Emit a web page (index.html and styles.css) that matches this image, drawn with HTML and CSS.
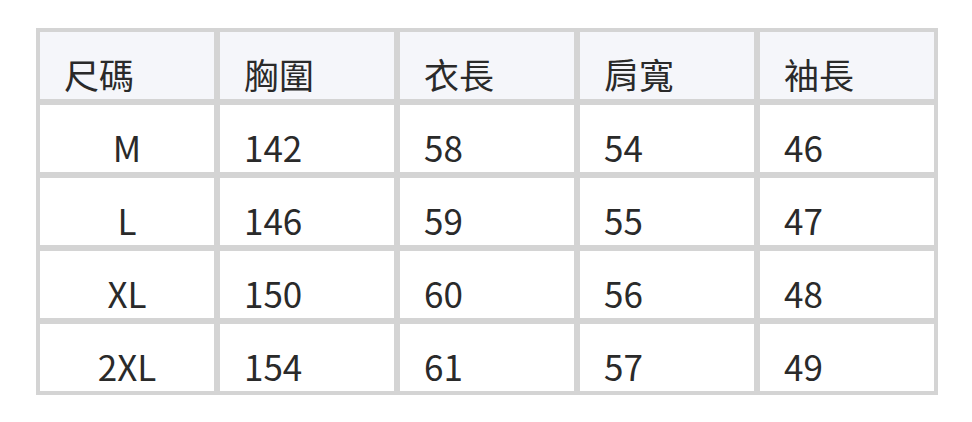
FILE: index.html
```html
<!DOCTYPE html>
<html lang="zh-Hant">
<head>
<meta charset="utf-8">
<title>尺碼表</title>
<link rel="stylesheet" href="styles.css">
</head>
<body>
<div class="page">
  <table class="size-table">
    <thead>
      <tr>
        <th>尺碼</th>
        <th>胸圍</th>
        <th>衣長</th>
        <th>肩寬</th>
        <th>袖長</th>
      </tr>
    </thead>
    <tbody>
      <tr><td class="size">M</td><td>142</td><td>58</td><td>54</td><td>46</td></tr>
      <tr><td class="size">L</td><td>146</td><td>59</td><td>55</td><td>47</td></tr>
      <tr><td class="size">XL</td><td>150</td><td>60</td><td>56</td><td>48</td></tr>
      <tr><td class="size">2XL</td><td>154</td><td>61</td><td>57</td><td>49</td></tr>
    </tbody>
  </table>
</div>
</body>
</html>
```
FILE: styles.css
```css
html, body {
  margin: 0;
  padding: 0;
  background: #ffffff;
}

.page {
  padding: 28px 0 0 36px;
}

.size-table {
  border-collapse: separate;
  border-spacing: 0;
  border: 1px solid #d4d4d4;
  table-layout: fixed;
  width: 902px;
  font-family: "Noto Sans CJK TC", "Noto Sans", sans-serif;
  font-size: 35px;
  color: #2a2a2a;
}

.size-table th,
.size-table td {
  border: 3px solid #d4d4d4;
  width: 150px;
  height: 51px;
  padding: 16px 0 0 24px;
  line-height: 51px;
  text-align: left;
  vertical-align: top;
  font-weight: 400;
  white-space: nowrap;
}

.size-table th {
  background: #f5f6fa;
}

.size-table td {
  background: #ffffff;
}

.size-table td.size {
  text-align: center;
  padding-left: 0;
}
```
